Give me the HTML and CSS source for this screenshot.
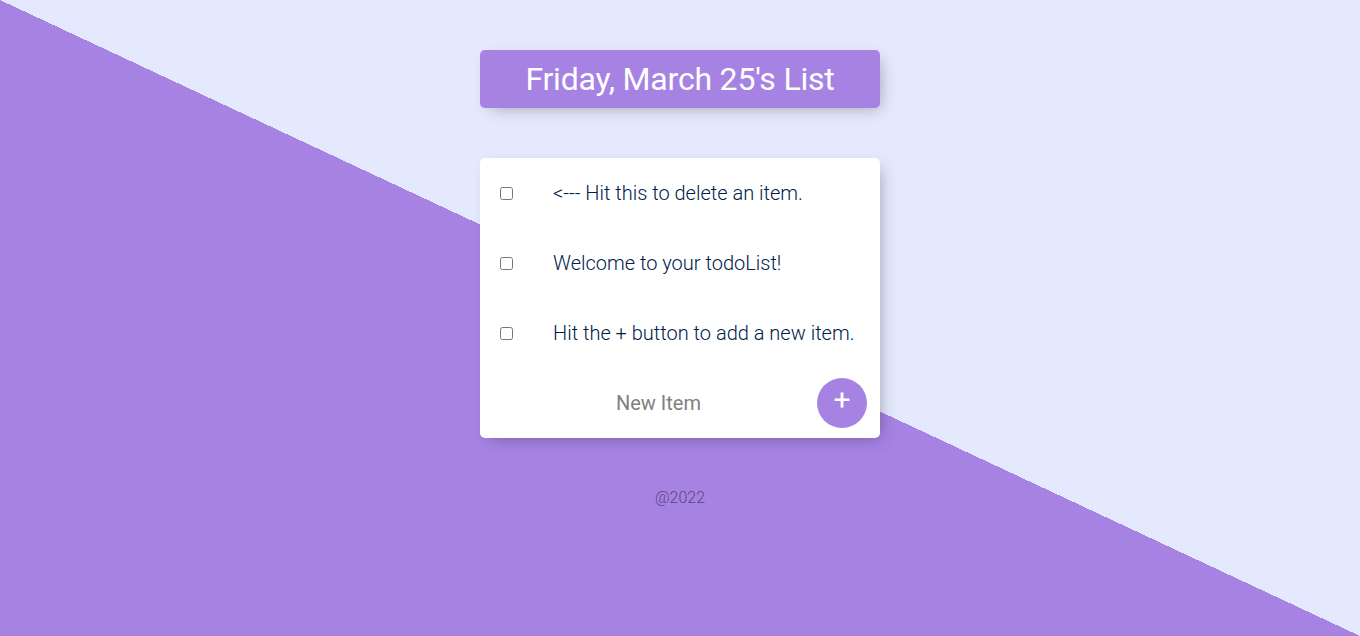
FILE: index.html
```html
<!DOCTYPE html>
<html lang="en">
<head>
<meta charset="utf-8">
<title>To-Do List</title>
<link rel="stylesheet" href="styles.css">
</head>
<body>
  <div class="box heading">
    <h1 class="title">Friday, March 25's List</h1>
  </div>
  <div class="box">
    <div class="item">
      <input type="checkbox" class="check">
      <p class="item-text">&lt;--- Hit this to delete an item.</p>
    </div>
    <div class="item">
      <input type="checkbox" class="check">
      <p class="item-text">Welcome to your todoList!</p>
    </div>
    <div class="item">
      <input type="checkbox" class="check">
      <p class="item-text">Hit the + button to add a new item.</p>
    </div>
    <form class="item new-form">
      <input type="text" class="new-input" placeholder="New Item" autocomplete="off">
      <button type="button" class="add-btn">+</button>
    </form>
  </div>
  <footer class="footer">@2022</footer>
</body>
</html>
```
FILE: styles.css
```css
html {
  min-height: 100%;
  background-color: #E4E9FD;
  background-image: linear-gradient(to top right, #A683E3 50%, #E4E9FD 50%);
  background-attachment: fixed;
  font-family: Roboto, "Liberation Sans", sans-serif;
}

body {
  margin: 0;
  padding: 50px 8px 0;
  display: flow-root;
}

.box {
  max-width: 400px;
  margin: 0 auto 50px;
  background: #fff;
  border-radius: 5px;
  box-shadow: 5px 5px 15px -5px rgba(0, 0, 0, 0.3);
}

.heading {
  background-color: #A683E3;
  text-align: center;
}

.title {
  color: #fff;
  padding: 10px;
  margin: 0;
  font-size: 32px;
  font-weight: 400;
  line-height: 38px;
  letter-spacing: -0.2px;
}

.item {
  min-height: 70px;
  display: flex;
  align-items: center;
}

.check {
  margin: 20px;
  width: 13px;
  height: 13px;
  flex: none;
}

.item-text {
  margin: 0;
  padding: 20px;
  font-size: 20px;
  font-weight: 300;
  color: #00204a;
}

.new-form {
  margin: 0;
  padding-left: 20px;
  height: 70px;
}

.new-input {
  text-align: center;
  height: 60px;
  border: none;
  background: transparent;
  font-family: Roboto, "Liberation Sans", sans-serif;
  font-size: 20px;
  font-weight: 400;
  width: 313px;
  padding: 0 2px;
  margin: 0;
}

.new-input:focus {
  outline: none;
}

.new-input::placeholder {
  color: grey;
  opacity: 1;
}

.add-btn {
  width: 50px;
  height: 50px;
  border-radius: 50%;
  border: 0;
  background-color: #A683E3;
  color: #fff;
  font-family: Roboto, "Liberation Sans", sans-serif;
  font-size: 30px;
  line-height: 1;
  padding: 0 0 6px 0;
  margin: 0;
  flex: none;
}

.footer {
  color: rgba(0, 0, 0, 0.5);
  text-align: center;
  font-size: 16px;
  font-weight: 300;
  line-height: 19px;
}
```
